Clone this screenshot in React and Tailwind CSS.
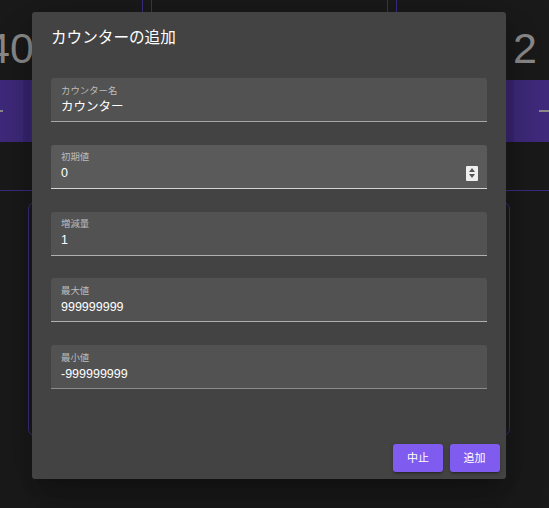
import React from 'react';

const FONT = { fontFamily: '"Liberation Sans", Roboto, "Noto Sans CJK JP", sans-serif' };

function Minus({ w = 'w-[14px]' }) {
  return <div className={`${w} h-[2px] bg-[#8a8a8a]`} />;
}

function Spinner() {
  return (
    <div className="w-[12px] h-[15px] bg-[#efefef] rounded-[1px] flex flex-col items-center justify-center gap-[2px]">
      <svg width="6" height="4" viewBox="0 0 6 4"><path d="M3 0 L6 4 L0 4 Z" fill="#555" /></svg>
      <svg width="6" height="4" viewBox="0 0 6 4"><path d="M0 0 L6 0 L3 4 Z" fill="#555" /></svg>
    </div>
  );
}

function Field({ label, value, hover, line, spinner }) {
  return (
    <div
      className={`h-[44px] shrink-0 rounded-t-[3px] border-b ${line} ${hover ? 'bg-[#5a5a5a]' : 'bg-[#525252]'} flex flex-col pl-[10px]`}
    >
      <span className="mt-[5.5px] text-[9.4px] leading-[13px] text-[#bcbcbc]">{label}</span>
      <div className="mt-[1px] h-[18px] flex items-center justify-between pr-[9px]">
        <span className="text-[12.5px] leading-[18px] text-white">{value}</span>
        {spinner && <Spinner />}
      </div>
    </div>
  );
}

export default function App() {
  const fields = [
    { label: 'カウンター名', value: 'カウンター', line: 'border-[#a6a6a6]' },
    { label: '初期値', value: '0', hover: true, line: 'border-[#d4d4d4]', spinner: true },
    { label: '増減量', value: '1', line: 'border-[#b0b0b0]' },
    { label: '最大値', value: '999999999', line: 'border-[#b0b0b0]' },
    { label: '最小値', value: '-999999999', line: 'border-[#8c8c8c]' },
  ];

  return (
    <div className="relative w-[549px] h-[508px] overflow-hidden bg-[#1a1a1a]" style={FONT}>
      {/* background page */}
      <div className="flex gap-[8px] ml-[-108px]">
        {/* card 1 */}
        <div className="w-[251px] h-[191px] shrink-0 border-x border-b border-[#3d2b80] flex flex-col">
          <div className="h-[80px] pt-[27px] pl-[93px] text-[43px] leading-none text-[#8b8b8b]">40</div>
          <div className="h-[62px] flex bg-[#3f2a7c]">
            <div className="w-[130px] flex items-center justify-end pr-[20px]">
              <Minus />
            </div>
            <div className="w-[8px] bg-[#392672]" />
            <div className="flex-1" />
          </div>
        </div>
        {/* card 2 */}
        <div className="w-[237px] h-[191px] shrink-0 border-x border-b border-[#3d2b80] flex flex-col">
          <div className="h-[80px]" />
          <div className="h-[62px] bg-[#3f2a7c]" />
        </div>
        {/* card 3 */}
        <div className="w-[256px] h-[191px] shrink-0 border-x border-b border-[#3d2b80] flex flex-col">
          <div className="h-[80px] pt-[27px] pl-[116px] text-[43px] leading-none text-[#8b8b8b]">2</div>
          <div className="h-[62px] flex bg-[#3f2a7c]">
            <div className="w-[109px]" />
            <div className="w-[8px] bg-[#392672]" />
            <div className="flex-1 flex items-center pl-[25px]">
              <Minus w="w-[16px]" />
            </div>
          </div>
        </div>
      </div>
      <div className="ml-[28px] mt-[11px] w-[482px] h-[234px] rounded-[7px] border border-[#3d2b80]" />

      {/* dialog */}
      <div className="absolute left-[32px] top-[12px] w-[474px] h-[467px] bg-[#434343] rounded-[3px] flex flex-col shadow-[0_11px_15px_-7px_rgba(0,0,0,0.2),0_24px_38px_3px_rgba(0,0,0,0.14),0_9px_46px_8px_rgba(0,0,0,0.12)]">
        <h2 className="px-[19px] pt-[12.5px] pb-[12.5px] text-[15.6px] leading-[25px] font-normal text-white">
          カウンターの追加
        </h2>
        <div className="px-[19px] pt-[16px] flex flex-col gap-[22.75px]">
          {fields.map((f) => (
            <Field key={f.label} {...f} />
          ))}
        </div>
        <div className="mt-auto flex justify-end gap-[6.5px] pr-[6.5px] pb-[7px]">
          <button className="w-[50px] h-[28px] rounded-[3px] bg-[#7f5bef] text-white text-[11px] font-normal shadow-[0_3px_1px_-2px_rgba(0,0,0,0.2),0_2px_2px_0_rgba(0,0,0,0.14),0_1px_5px_0_rgba(0,0,0,0.12)]">
            中止
          </button>
          <button className="w-[50px] h-[28px] rounded-[3px] bg-[#7f5bef] text-white text-[11px] font-normal shadow-[0_3px_1px_-2px_rgba(0,0,0,0.2),0_2px_2px_0_rgba(0,0,0,0.14),0_1px_5px_0_rgba(0,0,0,0.12)]">
            追加
          </button>
        </div>
      </div>
    </div>
  );
}
